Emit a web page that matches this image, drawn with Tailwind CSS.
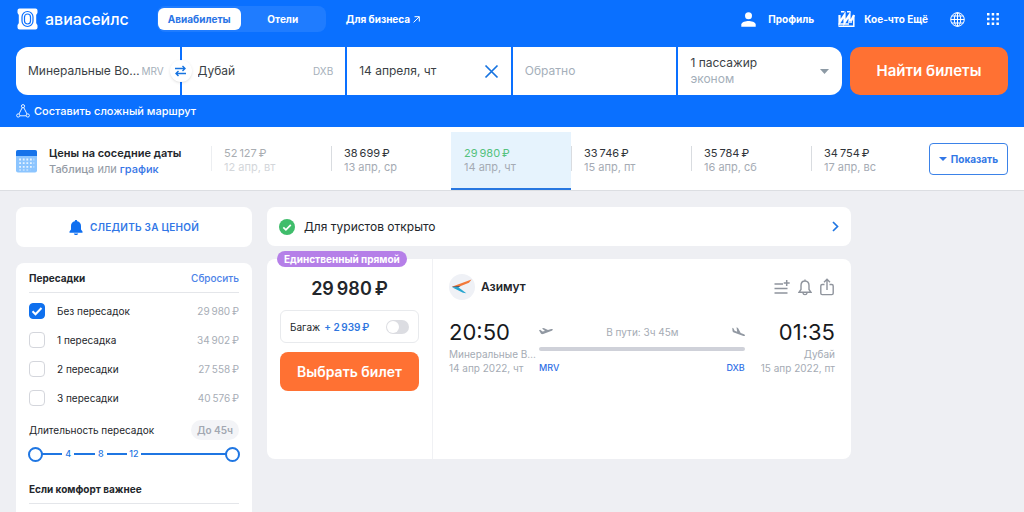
<!DOCTYPE html>
<html lang="ru">
  <head>
    <meta charset="UTF-8" />
    <meta name="viewport" content="width=device-width, initial-scale=1.0" />
    <title>Авиасейлс</title>
    <script src="https://cdn.jsdelivr.net/npm/@tailwindcss/browser@4"></script>
  </head>
  <body class="min-h-screen overflow-x-hidden bg-[#eeeff3] font-['Inter',sans-serif] text-[11px] leading-[14px] text-[#23262b]">
    <header class="bg-[#0a70ff] px-4 pb-2 text-white">
      <nav class="flex h-[38px] items-center pr-[9px] text-[10px] font-bold">
        <a href="#" class="flex items-center gap-[6px] text-[16px] leading-5 font-medium">
          <svg class="h-[22px] w-[23px]" viewBox="0 0 23 22" fill="none">
            <path fill="#fff" d="M3.500 .5h16a2 2 0 0 1 2 2v2c0 1.300-1.300 1.500-1.300 2.800v7.400c0 1.300 1.300 1.500 1.300 2.800v2a2 2 0 0 1-2 2h-16a2 2 0 0 1-2-2v-2c0-1.300 1.300-1.500 1.300-2.800V7.300C2.800 6 1.500 5.800 1.500 4.500v-2a2 2 0 0 1 2-2z" />
            <rect x="6" y="3.500" width="11" height="15" rx="5.500" stroke="#0a70ff" stroke-width="1.200" />
            <rect x="8.500" y="6" width="6" height="10" rx="3" stroke="#0a70ff" stroke-width="1.200" />
          </svg>
          авиасейлс
        </a>
        <div class="ml-7 flex h-[26px] w-[169px] items-center rounded-lg bg-[#1f7cff] p-px">
          <a href="#" class="flex h-[22px] w-[83px] items-center justify-center rounded-md bg-white text-[#2a74e6]">Авиабилеты</a>
          <a href="#" class="flex-1 text-center">Отели</a>
        </div>
        <a href="#" class="ml-5 flex items-center gap-[3px]">
          Для бизнеса
          <svg class="size-[7px]" viewBox="0 0 7 7" fill="none" stroke="currentColor"><path d="M1.500 .7h4.800v4.800M6.200 .8.600 6.400" /></svg>
        </a>
        <div class="ml-auto flex items-center">
          <a href="#" class="flex items-center gap-3">
            <svg class="size-[15px]" viewBox="0 0 15 15" fill="currentColor"><circle cx="7.500" cy="3.700" r="3.500" /><path d="M.3 14.800v-2.300c0-2.400 4.800-3.500 7.200-3.500s7.200 1.100 7.200 3.500v2.300z" /></svg>
            Профиль
          </a>
          <a href="#" class="ml-6 flex items-center gap-[9px]">
            <svg class="h-4 w-[17px]" viewBox="0 0 17 16" fill="none" stroke="currentColor">
              <path stroke-width="1.400" d="M3 .8h3.500M9 .8h3.500" />
              <path stroke-width="2.200" d="M1.500 4v7.500L6.500 4v7.500L11.500 4v6M16 4l-3 6" />
              <path stroke-width="1.500" d="M15.800 4v11.200H.5M.5 13h10.500M10 11h4" />
            </svg>
            Кое-что Ещё
          </a>
          <button type="button" aria-label="Язык" class="ml-[22px]">
            <svg class="size-[15px]" viewBox="0 0 15 15" fill="none" stroke="currentColor"><circle cx="7.500" cy="7.500" r="6.800" /><ellipse cx="7.500" cy="7.500" rx="3.200" ry="6.800" /><path d="M7.500 .7v13.600M.7 7.500h13.600M1.700 4h11.600M1.700 11h11.600" /></svg>
          </button>
          <button type="button" aria-label="Сервисы" class="ml-[22px]">
            <svg class="size-3" viewBox="0 0 12 12" fill="currentColor"><path d="M0 0h2.500v2.500H0zM4.700 0h2.500v2.500H4.700zM9.400 0h2.500v2.500H9.400zM0 4.700h2.500v2.500H0zM4.700 4.700h2.500v2.500H4.700zM9.400 4.700h2.500v2.500H9.400zM0 9.400h2.500v2.500H0zM4.700 9.400h2.500v2.500H4.700zM9.400 9.400h2.500v2.500H9.400z" /></svg>
          </button>
        </div>
      </nav>

      <form class="mt-[9px] flex h-12 gap-2 text-[12px] leading-4 text-[#3b3f45]">
        <div class="grid flex-1 grid-cols-5 gap-[2px]">
          <div class="relative flex items-center rounded-l-xl bg-white pr-4 pl-3">
            <input type="text" aria-label="Откуда" value="Минеральные Воды" class="w-full min-w-0 text-ellipsis outline-none" />
            <span class="text-[10px] text-[#a5afba]">MRV</span>
            <button type="button" aria-label="Поменять местами" class="absolute -right-3 z-10 flex size-[22px] items-center justify-center rounded-full bg-white shadow">
              <svg class="h-3 w-[11px]" viewBox="0 0 11 12" fill="none" stroke="#1673e0" stroke-width="1.400"><path d="M0 3.500h9.500M7.500 1l2.500 2.500L7.500 6M11 8.500H1.500M3.500 6 1 8.500 3.500 11" /></svg>
            </button>
          </div>
          <div class="flex items-center bg-white pr-3 pl-4">
            <input type="text" aria-label="Куда" value="Дубай" class="w-full min-w-0 text-ellipsis outline-none" />
            <span class="text-[10px] text-[#a5afba]">DXB</span>
          </div>
          <div class="flex items-center bg-white px-3">
            <input type="text" aria-label="Когда" value="14 апреля, чт" class="w-full min-w-0 outline-none" />
            <button type="button" aria-label="Очистить дату">
              <svg class="size-[15px]" viewBox="0 0 15 15" stroke="#1673e0" stroke-width="1.700"><path d="m1.500 1.500 12 12M13.500 1.500l-12 12" /></svg>
            </button>
          </div>
          <div class="flex items-center bg-white px-3">
            <input type="text" aria-label="Обратно" placeholder="Обратно" class="w-full min-w-0 outline-none placeholder:text-[#a5afba]" />
          </div>
          <button type="button" class="flex items-center justify-between rounded-r-xl bg-white px-3 text-left">
            <span>1 пассажир<span class="block text-[#a5afba]">эконом</span></span>
            <svg class="mr-px h-[5px] w-[9px]" viewBox="0 0 9 5" fill="#8d9aa5"><path d="M0 0h9L4.500 5z" /></svg>
          </button>
        </div>
        <button type="submit" class="w-[158px] rounded-[10px] bg-[#ff7133] text-[15px] font-semibold text-white">Найти билеты</button>
      </form>
      <a href="#" class="mt-2 flex items-center gap-1 text-[11px] leading-4 font-medium">
        <svg class="size-[14px]" viewBox="0 0 14 14" fill="none" stroke="currentColor" stroke-width=".9"><circle cx="7" cy="2.200" r="1.600" /><circle cx="2.200" cy="11.500" r="1.600" /><circle cx="11.800" cy="11.500" r="1.600" /><path d="M6.200 3.700 3 10M7.800 3.700l3.200 6.300M3.900 11.800h6.200" /></svg>
        Составить сложный маршрут
      </a>
    </header>

    <section class="flex h-16 items-center border-b border-[#dcdee2] bg-white px-4">
      <div class="flex w-[195px] items-center gap-3 pt-[5px] leading-4">
        <svg class="h-[23px] w-[21px]" viewBox="0 0 21 23">
          <rect width="21" height="22.500" rx="2" fill="#8cc5ff" /><path fill="#1673ea" d="M2 0h17a2 2 0 0 1 2 2v4H0V2a2 2 0 0 1 2-2z" />
          <path stroke="#e6f3ff" stroke-width="1.800" stroke-dasharray="1.800 1.800" d="M3.200 9.500h15M3.200 13.200h15M3.200 16.900h15" /><path stroke="#e6f3ff" stroke-width="1.200" stroke-dasharray="1.800 1.800" d="M3.200 20h11" />
        </svg>
        <div>
          <h2 class="font-semibold">Цены на соседние даты</h2>
          <p class="text-[#949ba5]"><a href="#" class="font-medium">Таблица</a> или <a href="#" class="font-medium text-[#3675e6]">график</a></p>
        </div>
      </div>
      <div class="flex min-w-0 flex-1 self-stretch overflow-hidden text-[#a5abb4]">
        <a href="#" class="my-[19px] w-30 shrink-0 border-l border-[#eceef1] px-3 text-[#d3d6da]"><b class="block font-normal text-[#a9adb2]">52&#8239;127&#8239;₽</b>12 апр, вт</a>
        <a href="#" class="my-[19px] w-30 shrink-0 border-l border-[#d9dce0] px-3"><b class="block font-normal text-[#30343a]">38&#8239;699&#8239;₽</b>13 апр, ср</a>
        <a href="#" class="mt-[5px] w-30 shrink-0 border-b-2 border-[#2877e0] bg-[#e6f3fd] px-[13px] pt-[14px]"><b class="block font-normal text-[#55c27d]">29&#8239;980&#8239;₽</b>14 апр, чт</a>
        <a href="#" class="my-[19px] w-30 shrink-0 border-l border-[#d9dce0] px-3"><b class="block font-normal text-[#30343a]">33&#8239;746&#8239;₽</b>15 апр, пт</a>
        <a href="#" class="my-[19px] w-30 shrink-0 border-l border-[#d9dce0] px-3"><b class="block font-normal text-[#30343a]">35&#8239;784&#8239;₽</b>16 апр, сб</a>
        <a href="#" class="my-[19px] w-30 shrink-0 border-l border-[#d9dce0] px-3"><b class="block font-normal text-[#30343a]">34&#8239;754&#8239;₽</b>17 апр, вс</a>
      </div>
      <button type="button" class="flex h-8 w-[79px] items-center justify-center gap-1 rounded-sm border border-[#3b82e8] text-[10px] font-bold text-[#3277e6]">
        <svg class="h-1 w-2" viewBox="0 0 8 4" fill="currentColor"><path d="M0 0h8L4 4z" /></svg>
        Показать
      </button>
    </section>

    <main class="flex items-start gap-[15px] p-4">
      <aside class="w-[236px] shrink-0 text-[10px]">
        <button type="button" class="flex h-10 w-full items-center justify-center gap-[7px] rounded-lg bg-white font-semibold tracking-wide text-[#3277e6]">
          <svg class="h-[15px] w-[14px]" viewBox="0 0 14 15" fill="#0f6ff0"><path d="M7 0c.8 0 1.200.5 1.200 1.200C10.700 1.700 12 3.500 12 6v3.500l1.500 2v1.300H.5v-1.300l1.500-2V6c0-2.500 1.300-4.300 3.800-4.800C5.800.5 6.200 0 7 0zM4.800 13.400h4.400c-.3 1-1.200 1.500-2.200 1.500s-1.900-.5-2.200-1.500z" /></svg>
          СЛЕДИТЬ ЗА ЦЕНОЙ
        </button>
        <div class="mt-4 rounded-lg bg-white px-[13px] pt-2 pb-10">
          <div class="flex items-center justify-between border-b border-[#e4e6ea] pb-[7px]">
            <h3 class="font-bold">Пересадки</h3>
            <button type="button" class="font-medium text-[#4b82e8]">Сбросить</button>
          </div>
          <div class="mt-[3px]">
            <label class="flex h-[29px] items-center">
              <span class="relative mr-3 size-4">
                <input type="checkbox" name="stops" checked class="block size-4 appearance-none rounded-sm border border-[#d4d6dc] checked:border-[#0f70ee] checked:bg-[#0f70ee]" />
                <svg class="pointer-events-none absolute inset-0" viewBox="0 0 16 16" fill="none" stroke="#fff" stroke-width="2"><path d="m3.500 8.300 3 3 6-6.300" /></svg>
              </span>
              Без пересадок <span class="ml-auto text-[#a7adb6]">29&#8239;980&#8239;₽</span>
            </label>
            <label class="flex h-[29px] items-center">
              <input type="checkbox" name="stops" class="mr-3 size-4 appearance-none rounded-sm border border-[#d4d6dc] checked:bg-[#0f70ee]" />
              1 пересадка <span class="ml-auto text-[#a7adb6]">34&#8239;902&#8239;₽</span>
            </label>
            <label class="flex h-[29px] items-center">
              <input type="checkbox" name="stops" class="mr-3 size-4 appearance-none rounded-sm border border-[#d4d6dc] checked:bg-[#0f70ee]" />
              2 пересадки <span class="ml-auto text-[#a7adb6]">27&#8239;558&#8239;₽</span>
            </label>
            <label class="flex h-[29px] items-center">
              <input type="checkbox" name="stops" class="mr-3 size-4 appearance-none rounded-sm border border-[#d4d6dc] checked:bg-[#0f70ee]" />
              3 пересадки <span class="ml-auto text-[#a7adb6]">40&#8239;576&#8239;₽</span>
            </label>
          </div>
          <div class="mt-2 flex items-center justify-between">
            <label for="layover">Длительность пересадок</label>
            <output for="layover" class="rounded-full bg-[#f3f4f7] px-[6px] py-[3px] font-semibold text-[#a2a8b2]">До 45ч</output>
          </div>
          <div class="relative -mx-px mt-[6px] h-4">
            <div class="absolute inset-x-1 top-[7px] h-[2px] bg-[#1f76e2]"></div>
            <div class="absolute inset-y-0 left-6 flex w-[99px] justify-around text-[9px] leading-4 font-medium text-[#1f76e2]">
              <span class="bg-white px-[3px]">4</span><span class="bg-white px-[3px]">8</span><span class="bg-white px-[2px]">12</span>
            </div>
            <input type="range" aria-label="От" min="0" max="45" value="0" class="pointer-events-none absolute inset-0 m-0 w-full appearance-none bg-transparent [&::-webkit-slider-thumb]:pointer-events-auto [&::-webkit-slider-thumb]:size-[15px] [&::-webkit-slider-thumb]:appearance-none [&::-webkit-slider-thumb]:rounded-full [&::-webkit-slider-thumb]:border-2 [&::-webkit-slider-thumb]:border-[#1f76e2] [&::-webkit-slider-thumb]:bg-white" />
            <input id="layover" type="range" min="0" max="45" value="45" class="pointer-events-none absolute inset-0 m-0 w-full appearance-none bg-transparent [&::-webkit-slider-thumb]:pointer-events-auto [&::-webkit-slider-thumb]:size-[15px] [&::-webkit-slider-thumb]:appearance-none [&::-webkit-slider-thumb]:rounded-full [&::-webkit-slider-thumb]:border-2 [&::-webkit-slider-thumb]:border-[#1f76e2] [&::-webkit-slider-thumb]:bg-white" />
          </div>
          <h3 class="mt-5 border-b border-[#e4e6ea] pb-[7px] font-bold">Если комфорт важнее</h3>
        </div>
      </aside>

      <div class="max-w-[584px] min-w-0 flex-1">
        <button type="button" class="flex h-[39px] w-full items-center gap-[9px] rounded-lg bg-white px-3 text-left text-[12px]">
          <svg class="size-4" viewBox="0 0 16 16"><circle cx="8" cy="8" r="8" fill="#3fbd6b" /><path d="m4.300 8.300 2.600 2.500 4.900-5" fill="none" stroke="#fff" stroke-width="1.700" /></svg>
          Для туристов открыто
          <svg class="ml-auto h-[11px] w-[7px]" viewBox="0 0 7 11" fill="none" stroke="#1f76e2" stroke-width="1.700"><path d="m1 1 4.500 4.500L1 10" /></svg>
        </button>

        <article class="relative mt-[13px] flex min-h-[200px] rounded-lg bg-white">
          <span class="absolute -top-2 left-[10px] rounded-full bg-[#b57fe8] px-[7px] py-px text-[10px] font-bold text-white">Единственный прямой</span>
          <div class="w-[166px] shrink-0 border-r border-[#f0f1f4] px-[13px] pt-5 text-center">
            <p class="text-[18px] leading-5 font-semibold">29&#8239;980&#8239;₽</p>
            <label class="mt-[11px] flex h-[33px] items-center gap-1 rounded-md border border-[#e8eaed] px-[9px] text-[10px]">
              Багаж <span class="font-semibold text-[#2f77df]">+ 2&#8239;939&#8239;₽</span>
              <input type="checkbox" role="switch" class="ml-auto h-[14px] w-[23px] appearance-none rounded-full bg-[#dcdde2] p-px before:block before:size-3 before:rounded-full before:bg-white" />
            </label>
            <button type="button" class="mt-[9px] h-[39px] w-full rounded-lg bg-[#ff7133] text-[14px] font-semibold text-white">Выбрать билет</button>
          </div>
          <div class="min-w-0 flex-1 px-4 pt-[15px]">
            <div class="flex items-center">
              <svg class="size-[26px]" viewBox="0 0 26 26">
                <circle cx="13" cy="13" r="13" fill="#eff1f6" />
                <path fill="#f2793a" d="M2.800 12.700 22.500 5.500 20 8.700 8 13.500z" /><path fill="#24527c" d="m2.800 12.700 8.700-.6-3 1.900z" /><path fill="#27a5cf" d="m3 13.300 6-.3 8.300 6.200-3.300-.4z" />
              </svg>
              <h3 class="ml-[6px] text-[12px] font-semibold">Азимут</h3>
              <div class="ml-auto flex items-center gap-2 pr-px text-[#8f949d]">
                <button type="button" aria-label="Добавить">
                  <svg class="size-4" viewBox="0 0 16 16" fill="none" stroke="currentColor" stroke-width="1.500"><path d="M.5 5H9M.5 9.500h13M.5 14h13M12.700 1v6M9.700 4h6" /></svg>
                </button>
                <button type="button" aria-label="Подписаться">
                  <svg class="h-[17px] w-[14px]" viewBox="0 0 14 17" fill="none" stroke="currentColor" stroke-width="1.400"><path d="M7 2C4.300 2 3 4 3 6.500v4L1 13.300h12l-2-2.800v-4C11 4 9.700 2 7 2zM7 .5V2M5 14c.2 2.200 3.800 2.200 4 0" /></svg>
                </button>
                <button type="button" aria-label="Поделиться">
                  <svg class="h-[18px] w-[14px]" viewBox="0 0 14 18" fill="none" stroke="currentColor" stroke-width="1.400"><path d="M4.500 6.500H2.200C1.300 6.500.8 7 .8 7.900v7.300c0 .9.5 1.400 1.400 1.400h9.600c.9 0 1.400-.5 1.400-1.400V7.900c0-.9-.5-1.400-1.400-1.400H9.500M7 12V1.300M4 4.200l3-3 3 3" /></svg>
                </button>
              </div>
            </div>
            <div class="mt-5 flex text-[10px] text-[#a5abb4]">
              <div class="w-[88px]">
                <p class="text-[22px] leading-6 text-[#17191d]">20:50</p>
                <p class="mt-[3px] truncate">Минеральные Воды</p>
                <p>14 апр 2022, чт</p>
              </div>
              <div class="mr-4 ml-[2px] flex-1">
                <div class="flex h-6 items-center justify-between">
                  <svg class="h-[8px] w-[14px]" viewBox="0 0 14 8" fill="#9198a2"><path d="M0 2.200 1.200 1.800 3.500 3.400 6 2.900 3 .4 4.700 0 9 2.100 12.200 1c1-.3 1.800.2 1.600.8-.1.400-.5.700-1 .9L4.200 6.100c-.9.300-1.700.2-2.300-.5z" /></svg>
                  <span>В пути: 3ч 45м</span>
                  <svg class="h-[10px] w-[13px]" viewBox="0 0 13 10" fill="#9198a2"><path d="M.3.800 1.400 1.200 2.600 3.700 5.200 4.700 4.500 .3 6 .9 8.700 6 12 7.300c.8.400 1.100 1 .9 1.400-.3.500-.9.500-1.500.3L1.900 5.500C1 5.100.5 4.500.5 3.700z" /></svg>
                </div>
                <div class="mt-[3px] h-1 rounded-full bg-[#cfd1d9]"></div>
                <div class="mt-[10px] flex justify-between text-[9px] font-medium text-[#2f70e6]"><span>MRV</span><span>DXB</span></div>
              </div>
              <div class="text-right">
                <p class="text-[22px] leading-6 text-[#17191d]">01:35</p>
                <p class="mt-[3px]">Дубай</p>
                <p>15 апр 2022, пт</p>
              </div>
            </div>
          </div>
        </article>
      </div>
    </main>
  </body>
</html>
